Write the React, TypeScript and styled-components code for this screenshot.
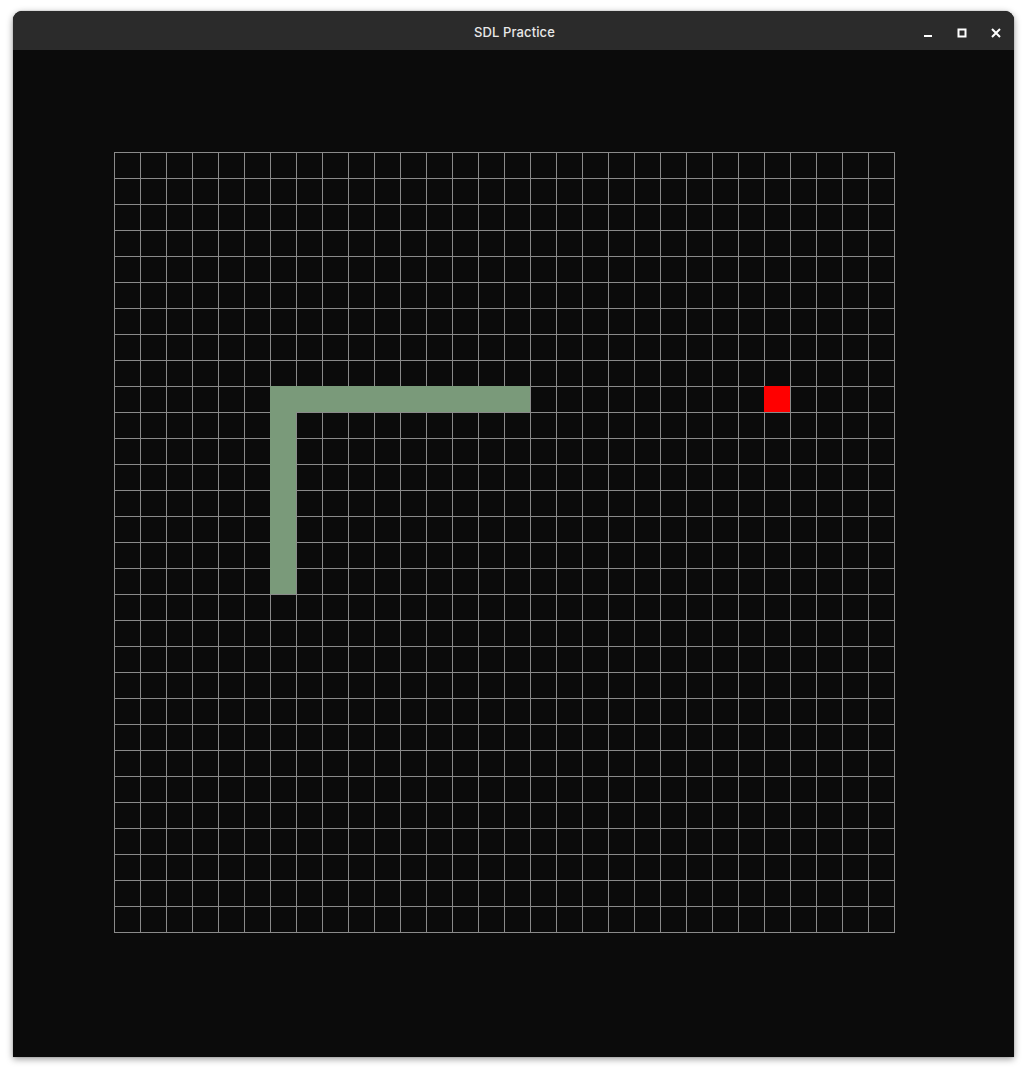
import styled, { createGlobalStyle } from 'styled-components';

const CELL = 26;
const COLS = 30;
const ROWS = 30;

const GlobalStyle = createGlobalStyle`
  html, body {
    margin: 0;
    padding: 0;
    background: #ffffff;
  }
  body {
    font-family: Inter, "Noto Sans", "Liberation Sans", sans-serif;
  }
`;

const Page = styled.div`
  padding: 11px 0 0 13px;
  height: 1074px;
  box-sizing: border-box;
`;

const Window = styled.div`
  width: 1001px;
  height: 1046px;
  display: flex;
  flex-direction: column;
  border-radius: 9px 9px 0 0;
  overflow: hidden;
  background: #0b0b0b;
  box-shadow: 0 2px 7px rgba(0, 0, 0, 0.4), 0 0 1px rgba(0, 0, 0, 0.5);
`;

const TitleBar = styled.div`
  height: 39px;
  flex-shrink: 0;
  background: #2b2b2b;
  display: grid;
  grid-template-columns: 1fr auto 1fr;
  align-items: center;
`;

const Title = styled.div`
  grid-column: 2;
  color: #e8e8e8;
  font-size: 13px;
  font-weight: 500;
  letter-spacing: 0.1px;
  padding-top: 3px;
  transform: translateX(1px);
`;

const Controls = styled.div`
  grid-column: 3;
  justify-self: end;
  display: flex;
  align-items: center;
  gap: 18px;
  padding-right: 10px;
  padding-top: 5px;
`;

const ControlButton = styled.button`
  width: 16px;
  height: 16px;
  padding: 0;
  border: none;
  background: transparent;
  display: flex;
  align-items: center;
  justify-content: center;
  color: #ffffff;
`;

const Content = styled.div`
  flex: 1;
  background: #0b0b0b;
  padding: 102px 0 0 101px;
`;

const Board = styled.div`
  display: grid;
  grid-template-columns: repeat(${COLS}, ${CELL}px) 1px;
  grid-template-rows: repeat(${ROWS}, ${CELL}px) 1px;
  width: ${COLS * CELL + 1}px;
  height: ${ROWS * CELL + 1}px;
  background-color: #0b0b0b;
  background-image:
    linear-gradient(to right, #8a8a8a 1px, transparent 1px),
    linear-gradient(to bottom, #8a8a8a 1px, transparent 1px);
  background-size: ${CELL}px ${CELL}px;
`;

const Tile = styled.div<{ $col: number; $row: number; $kind: 'snake' | 'food' }>`
  grid-column: ${({ $col }) => $col + 1};
  grid-row: ${({ $row }) => $row + 1};
  background: ${({ $kind }) => ($kind === 'food' ? '#ff0000' : '#7a9a7a')};
`;

const snake: [number, number][] = [
  ...Array.from({ length: 10 }, (_, i) => [15 - i, 9] as [number, number]),
  ...Array.from({ length: 7 }, (_, i) => [6, 10 + i] as [number, number]),
];

const food: [number, number] = [25, 9];

export default function App() {
  return (
    <>
      <GlobalStyle />
      <Page>
        <Window>
          <TitleBar>
            <Title>SDL Practice</Title>
            <Controls>
              <ControlButton aria-label="Minimize">
                <svg width="10" height="10" viewBox="0 0 10 10">
                  <rect x="1" y="7" width="8" height="2" fill="currentColor" />
                </svg>
              </ControlButton>
              <ControlButton aria-label="Maximize">
                <svg width="10" height="10" viewBox="0 0 10 10">
                  <rect x="1.5" y="1.5" width="7" height="7" fill="none" stroke="currentColor" strokeWidth="2" />
                </svg>
              </ControlButton>
              <ControlButton aria-label="Close">
                <svg width="10" height="10" viewBox="0 0 10 10">
                  <path d="M1 1 L9 9 M9 1 L1 9" stroke="currentColor" strokeWidth="2" />
                </svg>
              </ControlButton>
            </Controls>
          </TitleBar>
          <Content>
            <Board>
              {snake.map(([c, r]) => (
                <Tile key={`s-${c}-${r}`} $col={c} $row={r} $kind="snake" />
              ))}
              <Tile $col={food[0]} $row={food[1]} $kind="food" />
            </Board>
          </Content>
        </Window>
      </Page>
    </>
  );
}
